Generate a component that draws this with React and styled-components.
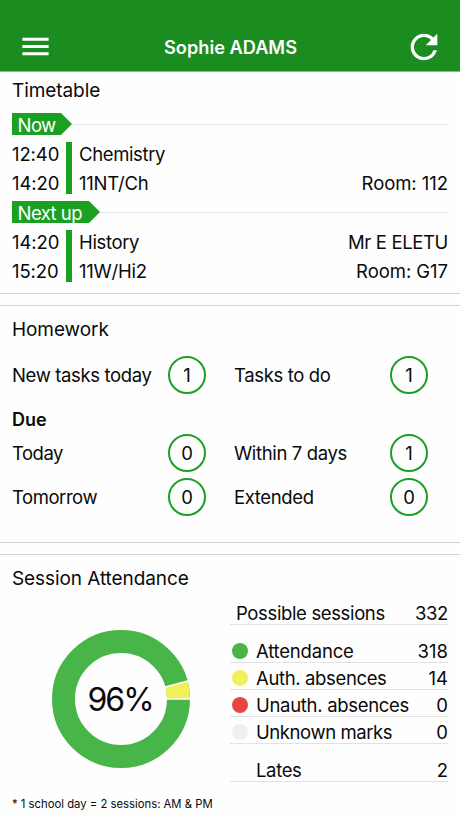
import React from "react";
import styled, { createGlobalStyle } from "styled-components";
import { MdMenu, MdRefresh } from "react-icons/md";

const GlobalStyle = createGlobalStyle`
  * {
    box-sizing: border-box;
  }
  body {
    margin: 0;
    background: #fefefe;
    color: #0a0a0a;
    font-family: Inter, "Liberation Sans", sans-serif;
    font-size: 18.5px;
    line-height: 29px;
  }
`;

const Page = styled.div`
  width: 460px;
  height: 818px;
  overflow: hidden;
`;

const Header = styled.header`
  display: flex;
  justify-content: space-between;
  align-items: center;
  height: 72px;
  padding: 22px 16px 0 18px;
  background: #1b8c20;
  border-bottom: 1px solid #7fbf82;
  color: #fff;
`;

const IconButton = styled.button`
  display: flex;
  padding: 0;
  border: 0;
  background: none;
  color: inherit;
`;

const HeaderTitle = styled.h1`
  margin: 1px 0 0 4px;
  font-size: 18.2px;
  font-weight: 600;
`;

const Card = styled.section`
  height: ${props => props.$height}px;
  padding: ${props => props.$top}px 12px 0;
  border-bottom: ${props => (props.$last ? "0" : "1px solid #cfcfcf")};
`;

const Gap = styled.div`
  height: 12px;
  border-bottom: 1px solid #d4d4d4;
`;

const CardTitle = styled.h2`
  margin: 0;
  font-size: 19px;
  font-weight: 400;
  line-height: 30px;
  letter-spacing: -0.08px;
`;

const Text = styled.span`
  white-space: nowrap;
  letter-spacing: ${props => props.$spacing ?? -0.36}px;
`;

const TagRow = styled.div`
  display: flex;
  align-items: center;
  height: 22px;
  margin-top: ${props => props.$top}px;
`;

const Tag = styled.div`
  width: ${props => props.$width}px;
  height: 22px;
  padding-left: 5.5px;
  background: #1ca022;
  clip-path: polygon(0 0, calc(100% - 11px) 0, 100% 50%, calc(100% - 11px) 100%, 0 100%);
  color: #fff;
  line-height: 24px;
  letter-spacing: -0.55px;
  white-space: nowrap;
`;

const TagLine = styled.div`
  flex: 1;
  height: 1px;
  background: #e4e4e4;
`;

const Lesson = styled.div`
  display: grid;
  grid-template-columns: 54px 6px 1fr auto;
  height: 59px;
  margin-top: 4px;
`;

const LessonColumn = styled.div`
  display: flex;
  flex-direction: column;
  align-items: ${props => (props.$end ? "flex-end" : "flex-start")};
  justify-content: flex-end;
  padding-left: ${props => props.$left || 0}px;
`;

const LessonBar = styled.div`
  height: 52px;
  margin-top: 3px;
  background: #1ca022;
`;

const TaskGrid = styled.div`
  display: grid;
  grid-template-columns: 156px 66px 156px 1fr;
  align-items: center;
  row-gap: 6px;
  margin-top: ${props => props.$top}px;
`;

const Count = styled.span`
  display: flex;
  align-items: center;
  justify-content: center;
  width: 38px;
  height: 38px;
  border: 2px solid #1ca022;
  border-radius: 50%;
`;

const DueTitle = styled.h3`
  margin: 11px 0 0;
  font-size: 18px;
  font-weight: 600;
  line-height: 29px;
`;

const Attendance = styled.div`
  display: flex;
  height: 202px;
`;

const ChartBox = styled.div`
  width: 218px;
  padding: 36px 0 0 39.5px;
`;

const Legend = styled.div`
  width: 218px;
  padding-top: 4px;
`;

const LegendRow = styled.div`
  display: flex;
  align-items: flex-end;
  height: ${props => props.$height}px;
  padding-left: ${props => props.$left || 0}px;
  border-bottom: 1px solid #e2e2e2;
  line-height: 22px;
`;

const Dot = styled.span`
  width: 16px;
  height: 16px;
  margin: 0 8px 3px 2px;
  border-radius: 50%;
  background: ${props => props.$color};
`;

const Value = styled(Text)`
  margin-left: auto;
`;

const Footnote = styled.p`
  margin: 0;
  font-size: 11.3px;
  line-height: 16px;
`;

const lessons = [
  {
    tag: "Now",
    tagWidth: 60,
    top: 7,
    start: "12:40",
    end: "14:20",
    subject: "Chemistry",
    group: "11NT/Ch",
    room: "Room: 112"
  },
  {
    tag: "Next up",
    tagWidth: 88,
    top: 3,
    start: "14:20",
    end: "15:20",
    subject: "History",
    group: "11W/Hi2",
    teacher: "Mr E ELETU",
    room: "Room: G17"
  }
];

const marks = [
  { label: "Attendance", value: 318, color: "#48b548", height: 38, spacing: -0.2 },
  { label: "Auth. absences", value: 14, color: "#f1f05a", height: 27 },
  { label: "Unauth. absences", value: 0, color: "#e94444", height: 27, spacing: -0.3 },
  { label: "Unknown marks", value: 0, color: "#efefef", height: 27, spacing: -0.42 }
];

const Donut = () => (
  <svg width="138" height="138" viewBox="-69 -69 138 138">
    <circle r="57.5" fill="none" stroke="#48b548" strokeWidth="23" />
    <path
      d="M46 0H69A69 69 0 0 0 66.6 -18L44.4 -12A46 46 0 0 1 46 0Z"
      fill="#f1f05a"
    />
    <path d="M45 0H70M43.5 -11.8L67.6 -18.2" stroke="#fff" strokeWidth="1.4" />
    <text
      x="-1"
      y="11.5"
      textAnchor="middle"
      fontSize="32"
      fill="#0a0a0a"
      letterSpacing="-2"
    >
      96%
    </text>
  </svg>
);

const App = () => (
  <Page>
    <GlobalStyle />
    <Header>
      <IconButton aria-label="Menu">
        <MdMenu size={35} />
      </IconButton>
      <HeaderTitle>Sophie ADAMS</HeaderTitle>
      <IconButton aria-label="Refresh">
        <MdRefresh size={40} />
      </IconButton>
    </Header>

    <Card $height={222} $top={4}>
      <CardTitle>Timetable</CardTitle>
      {lessons.map(lesson => (
        <React.Fragment key={lesson.tag}>
          <TagRow $top={lesson.top}>
            <Tag $width={lesson.tagWidth}>{lesson.tag}</Tag>
            <TagLine />
          </TagRow>
          <Lesson>
            <LessonColumn>
              <Text $spacing={-0.1}>{lesson.start}</Text>
              <Text $spacing={-0.1}>{lesson.end}</Text>
            </LessonColumn>
            <LessonBar />
            <LessonColumn $left={7}>
              <Text>{lesson.subject}</Text>
              <Text $spacing={-0.25}>{lesson.group}</Text>
            </LessonColumn>
            <LessonColumn $end>
              {lesson.teacher && <Text>{lesson.teacher}</Text>}
              <Text $spacing={-0.05}>{lesson.room}</Text>
            </LessonColumn>
          </Lesson>
        </React.Fragment>
      ))}
    </Card>
    <Gap />

    <Card $height={237} $top={9}>
      <CardTitle>Homework</CardTitle>
      <TaskGrid $top={11}>
        <Text>New tasks today</Text>
        <Count>1</Count>
        <Text>Tasks to do</Text>
        <Count>1</Count>
      </TaskGrid>
      <DueTitle>Due</DueTitle>
      <TaskGrid $top={0}>
        <Text $spacing={-0.5}>Today</Text>
        <Count>0</Count>
        <Text>Within 7 days</Text>
        <Count>1</Count>
        <Text $spacing={-0.45}>Tomorrow</Text>
        <Count>0</Count>
        <Text>Extended</Text>
        <Count>0</Count>
      </TaskGrid>
    </Card>
    <Gap />

    <Card $height={263} $top={9} $last>
      <CardTitle>Session Attendance</CardTitle>
      <Attendance>
        <ChartBox>
          <Donut />
        </ChartBox>
        <Legend>
          <LegendRow $height={27} $left={6}>
            <Text>Possible sessions</Text>
            <Value>332</Value>
          </LegendRow>
          {marks.map(mark => (
            <LegendRow key={mark.label} $height={mark.height}>
              <Dot $color={mark.color} />
              <Text $spacing={mark.spacing}>{mark.label}</Text>
              <Value $spacing={0}>{mark.value}</Value>
            </LegendRow>
          ))}
          <LegendRow $height={38} $left={26}>
            <Text>Lates</Text>
            <Value $spacing={0}>2</Value>
          </LegendRow>
        </Legend>
      </Attendance>
      <Footnote>* 1 school day = 2 sessions: AM &amp; PM</Footnote>
    </Card>
  </Page>
);

export default App;
